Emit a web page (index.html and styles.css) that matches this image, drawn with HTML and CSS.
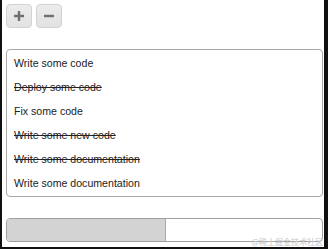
FILE: index.html
```html
<!DOCTYPE html>
<html>
<head>
<meta charset="utf-8">
<link rel="stylesheet" href="styles.css">
</head>
<body>
<div class="frame">
  <div class="toolbar">
    <button class="btn" aria-label="add">
      <svg width="12" height="12" viewBox="0 0 12 12"><path d="M6 1v10M1 6h10" stroke="#707070" stroke-width="2.4"/></svg>
    </button>
    <button class="btn" aria-label="remove">
      <svg width="12" height="12" viewBox="0 0 12 12"><path d="M1 6h10" stroke="#707070" stroke-width="2.4"/></svg>
    </button>
  </div>
  <ul class="list">
    <li class="item">Write some code</li>
    <li class="item done">Deploy some code</li>
    <li class="item">Fix some code</li>
    <li class="item done">Write some new code</li>
    <li class="item done">Write some documentation</li>
    <li class="item">Write some documentation</li>
  </ul>
  <div class="progress"><div class="fill" style="width:50%"></div></div>
  <span class="watermark">@稀土掘金技术社区</span>
</div>
</body>
</html>
```
FILE: styles.css
```css
html, body {
  margin: 0;
  padding: 0;
  background: #fff;
}
.frame {
  position: relative;
  box-sizing: border-box;
  width: 328px;
  height: 249px;
  border-left: 2px solid #111;
  border-right: 4px solid #111;
  border-bottom: 2px solid #111;
  padding: 4px 0 0 4px;
  font-family: "Liberation Sans", Arial, sans-serif;
  font-size: 10.6px;
  color: #222;
  display: flex;
  flex-direction: column;
}
.toolbar {
  display: flex;
  gap: 4px;
}
.btn {
  box-sizing: border-box;
  width: 26px;
  height: 24px;
  padding: 0;
  margin: 0;
  border: 1px solid #d2d2d2;
  border-radius: 4px;
  background: linear-gradient(#ececec, #e2e2e2);
  display: flex;
  align-items: center;
  justify-content: center;
}
.btn svg { display: block; }
.list {
  list-style: none;
  margin: 21px 0 0 0;
  padding: 1px 0 1px 7px;
  width: 317px;
  box-sizing: border-box;
  border: 1px solid #a8a8a8;
  border-radius: 4px;
}
.item {
  height: 24px;
  line-height: 24px;
}
.done {
  text-decoration: line-through;
}
.progress {
  margin-top: 21px;
  box-sizing: border-box;
  width: 317px;
  height: 24px;
  border: 1px solid #a0a0a0;
  border-radius: 4px;
  overflow: hidden;
  background: #fff;
}
.fill {
  height: 100%;
  background: #d3d3d3;
  border-right: 1px solid #a8a8a8;
}
.watermark {
  position: absolute;
  right: 1px;
  bottom: 0px;
  font-family: "Noto Sans CJK SC", sans-serif;
  font-size: 8px;
  line-height: 10px;
  color: #c4c4c4;
}
```
